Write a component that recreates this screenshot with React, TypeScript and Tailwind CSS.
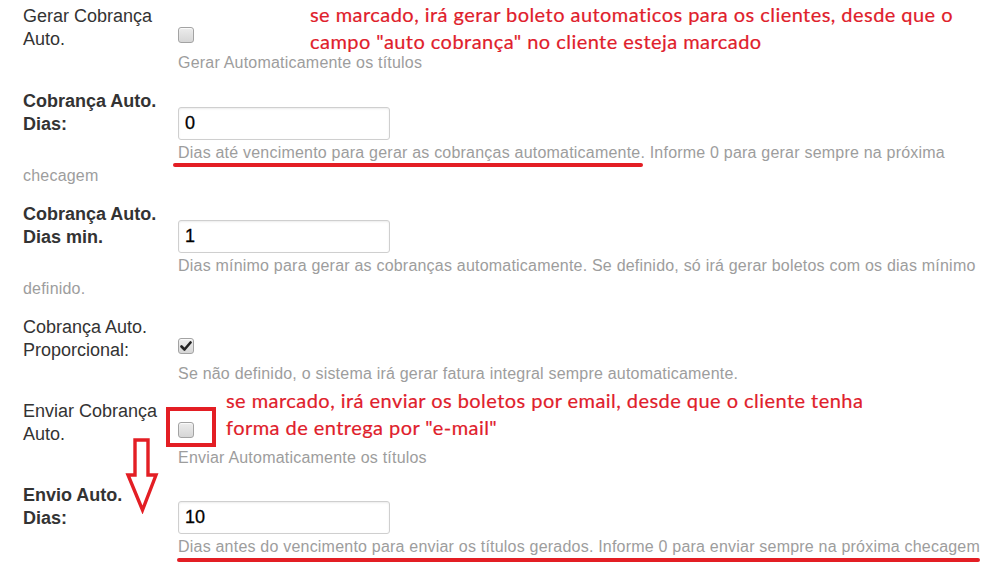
import React from "react";

const Label = ({ lines, bold }: { lines: [string, string]; bold?: boolean }) => (
  <div
    className={
      bold
        ? "w-[155px] shrink-0 text-[18px] leading-[23px] text-[#333] font-bold"
        : "w-[155px] shrink-0 text-[18px] leading-[23px] text-[#333]"
    }
  >
    {lines[0]}
    <br />
    {lines[1]}
  </div>
);

const Checkbox = ({ checked }: { checked?: boolean }) => (
  <div className="mt-[22px] h-[16px] w-[16px] rounded-[3px] border border-[#a3a3a3] bg-gradient-to-b from-[#ececec] to-[#d6d6d6] shadow-[inset_0_1px_1px_rgba(255,255,255,0.8)] flex items-center justify-center">
    {checked && (
      <svg width="12" height="12" viewBox="0 0 12 12">
        <path d="M1.5 6.5 L4.5 9.5 L10.5 2.5" fill="none" stroke="#222" strokeWidth="2.6" strokeLinecap="round" strokeLinejoin="round" />
      </svg>
    )}
  </div>
);

const Help = ({ children, className }: { children: React.ReactNode; className?: string }) => (
  <p className={"text-[16px] leading-[23px] tracking-[0.21px] text-[#9d9d9d] whitespace-nowrap " + (className ?? "")}>{children}</p>
);

const TextInput = ({ value }: { value: string }) => (
  <input
    readOnly
    value={value}
    className="mt-[17px] h-[33px] w-[212px] rounded-[3px] border border-[#cfcfcf] bg-white px-[6px] text-[18px] text-black shadow-[inset_0_1px_2px_rgba(0,0,0,0.08)] outline-none [-webkit-text-stroke:0.3px_#000]"
    style={{ fontFamily: '"Liberation Sans", Arial, sans-serif' }}
  />
);

export default function App() {
  return (
    <div
      className="relative h-[576px] w-[1000px] overflow-hidden bg-white pl-[23px] pt-[5px]"
      style={{ fontFamily: '"Liberation Sans", Arial, sans-serif' }}
    >
      {/* Row 1 */}
      <div className="flex">
        <Label lines={["Gerar Cobrança", "Auto."]} />
        <div>
          <Checkbox />
          <Help className="mt-[8px]">Gerar Automaticamente os títulos</Help>
        </div>
      </div>

      {/* Row 2 */}
      <div className="mt-[16px]">
        <div className="flex">
          <Label bold lines={["Cobrança Auto.", "Dias:"]} />
          <div>
            <TextInput value="0" />
            <Help className="mt-[1px]">
              Dias até vencimento para gerar as cobranças automaticamente. Informe 0 para gerar sempre na próxima
            </Help>
          </div>
        </div>
        <Help>checagem</Help>
      </div>

      {/* Row 3 */}
      <div className="mt-[16px]">
        <div className="flex">
          <Label bold lines={["Cobrança Auto.", "Dias min."]} />
          <div>
            <TextInput value="1" />
            <Help className="mt-[1px]">
              Dias mínimo para gerar as cobranças automaticamente. Se definido, só irá gerar boletos com os dias mínimo
            </Help>
          </div>
        </div>
        <Help>definido.</Help>
      </div>

      {/* Row 4 */}
      <div className="mt-[16px] flex">
        <Label lines={["Cobrança Auto.", "Proporcional:"]} />
        <div>
          <Checkbox checked />
          <Help className="mt-[8px]">Se não definido, o sistema irá gerar fatura integral sempre automaticamente.</Help>
        </div>
      </div>

      {/* Row 5 */}
      <div className="mt-[15px] flex">
        <Label lines={["Enviar Cobrança", "Auto."]} />
        <div>
          <Checkbox />
          <Help className="mt-[8px]">Enviar Automaticamente os títulos</Help>
        </div>
      </div>

      {/* Row 6 */}
      <div className="mt-[15px] flex">
        <Label bold lines={["Envio Auto.", "Dias:"]} />
        <div>
          <TextInput value="10" />
          <Help className="mt-[1px]">
            Dias antes do vencimento para enviar os títulos gerados. Informe 0 para enviar sempre na próxima checagem
          </Help>
        </div>
      </div>

      {/* Annotations */}
      <div
        className="absolute left-[310px] top-[1px] text-[20px] leading-[27px] tracking-[0.45px] text-[#e0202b] whitespace-nowrap [-webkit-text-stroke:0.2px_#e0202b]"
        style={{ fontFamily: 'Lato, "Open Sans", sans-serif' }}
      >
        <div>se marcado, irá gerar boleto automaticos para os clientes, desde que o</div>
        <div>campo "auto cobrança" no cliente esteja marcado</div>
      </div>
      <div
        className="absolute left-[226px] top-[387px] text-[20px] leading-[27px] tracking-[0.45px] text-[#e0202b] whitespace-nowrap [-webkit-text-stroke:0.2px_#e0202b]"
        style={{ fontFamily: 'Lato, "Open Sans", sans-serif' }}
      >
        <div>se marcado, irá enviar os boletos por email, desde que o cliente tenha</div>
        <div>forma de entrega por "e-mail"</div>
      </div>

      <div className="absolute left-[173px] top-[163px] h-[4px] w-[470px] rounded-full bg-[#e31e24]" />
      <div className="absolute left-[177px] top-[558px] h-[4px] w-[803px] rounded-full bg-[#e31e24]" />
      <div className="absolute left-[166px] top-[407px] h-[40px] w-[50px] border-[4px] border-[#e31e24]" />

      <svg className="absolute left-[124px] top-[436px]" width="36" height="78" viewBox="0 0 36 78">
        <polygon
          points="11,4 24,4 24,39 32,39 18.5,74 4,39 11,39"
          fill="none"
          stroke="#e31e24"
          strokeWidth="3.4"
          strokeLinejoin="miter"
        />
      </svg>
    </div>
  );
}
